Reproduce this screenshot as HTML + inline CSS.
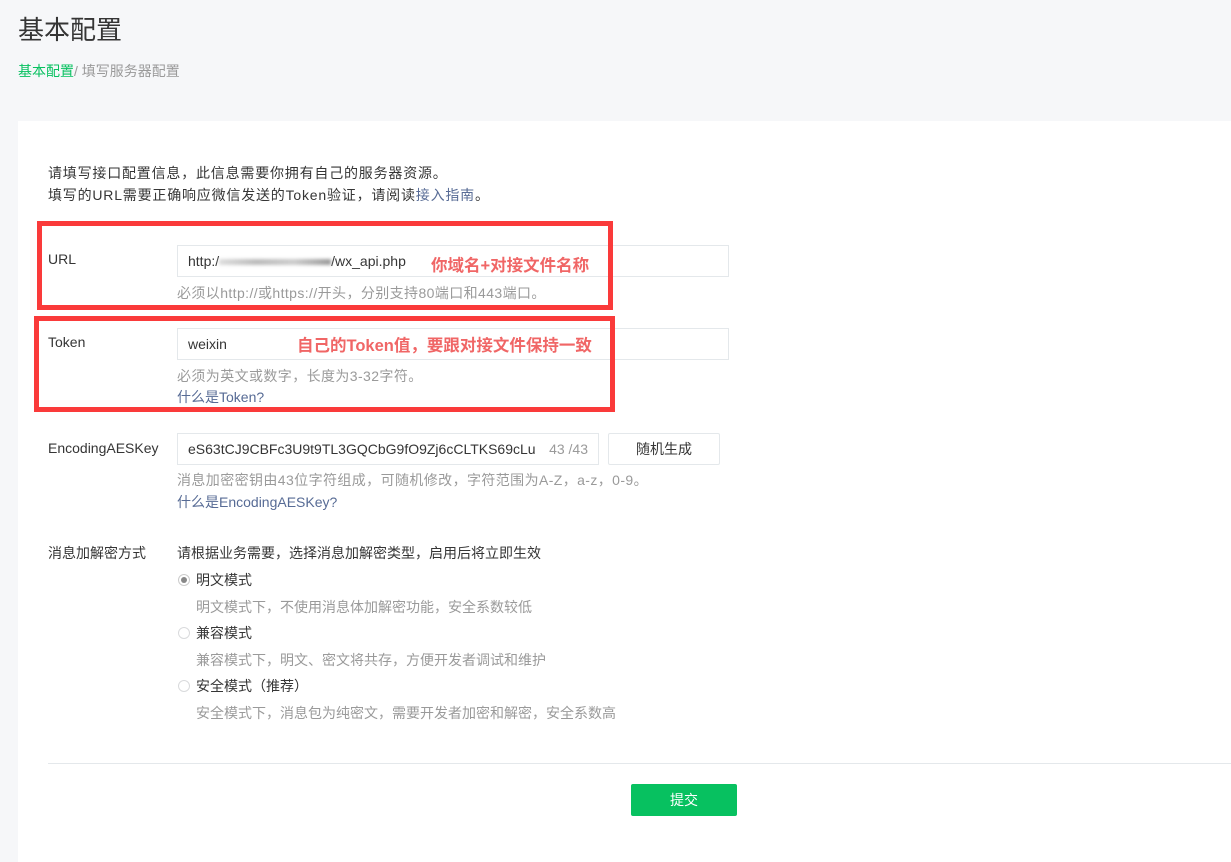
<!DOCTYPE html>
<html><head><meta charset="utf-8"><style>
body{margin:0;width:1231px;height:862px;background:#f6f7f9;font-family:"Liberation Sans","Noto Sans CJK SC",sans-serif;color:#353535;position:relative;overflow:hidden}
.a{position:absolute;white-space:nowrap}
.card{position:absolute;left:18px;top:121px;width:1213px;height:741px;background:#fff}
.in{position:absolute;border:1px solid #e4e8eb;background:#fff;box-sizing:border-box;font-size:14px;line-height:30px;padding-left:10px}
.h{font-size:14px;color:#9a9a9a;letter-spacing:0.4px}
.lk{font-size:14px;color:#576b95}
.rb{position:absolute;border:5px solid #fa3a3a;box-sizing:border-box}
.red{color:#f06666;font-weight:bold;font-size:16.5px}
.r{position:absolute;width:12px;height:12px;border:1px solid #d9dadc;border-radius:50%;box-sizing:border-box;background:#fff}
</style></head><body>
<div class="a" style="left:18px;top:10px;font-size:26px;color:#353535">基本配置</div>
<div class="a" style="left:18px;top:61px;font-size:14px;color:#9a9a9a"><span style="color:#07c160">基本配置</span>/ 填写服务器配置</div>
<div class="card"></div>
<div class="a" style="left:48px;top:162px;font-size:14px;line-height:22px;letter-spacing:0.8px">请填写接口配置信息，此信息需要你拥有自己的服务器资源。<br>填写的URL需要正确响应微信发送的Token验证，请阅读<span style="color:#576b95">接入指南</span>。</div>

<div class="a" style="left:48px;top:251px;font-size:14px">URL</div>
<div class="in" style="left:177px;top:245px;width:552px;height:32px">http:/<span style="display:inline-block;width:112px;height:6px;background:linear-gradient(90deg,#ddd,#bbb,#ccc,#999);vertical-align:middle;filter:blur(1.5px)"></span>/wx_api.php</div>
<div class="a red" style="left:431px;top:252px">你域名+对接文件名称</div>
<div class="a h" style="left:177px;top:283px">必须以http://或https://开头，分别支持80端口和443端口。</div>
<div class="rb" style="left:37px;top:221px;width:576px;height:89px"></div>

<div class="a" style="left:48px;top:334px;font-size:14px">Token</div>
<div class="in" style="left:177px;top:328px;width:552px;height:32px">weixin</div>
<div class="a red" style="left:297px;top:332px">自己的Token值，要跟对接文件保持一致</div>
<div class="a h" style="left:177px;top:366px">必须为英文或数字，长度为3-32字符。</div>
<div class="a lk" style="left:177px;top:387px">什么是Token?</div>
<div class="rb" style="left:34px;top:316px;width:581px;height:96px"></div>

<div class="a" style="left:48px;top:440px;font-size:14px">EncodingAESKey</div>
<div class="in" style="left:177px;top:433px;width:422px;height:32px">eS63tCJ9CBFc3U9t9TL3GQCbG9fO9Zj6cCLTKS69cLu<span style="position:absolute;right:10px;color:#9a9a9a">43 /43</span></div>
<div class="in" style="left:608px;top:433px;width:112px;height:32px;padding:0;text-align:center;font-size:14px;border-radius:2px">随机生成</div>
<div class="a h" style="left:177px;top:470px">消息加密密钥由43位字符组成，可随机修改，字符范围为A-Z，a-z，0-9。</div>
<div class="a lk" style="left:177px;top:492px">什么是EncodingAESKey?</div>

<div class="a" style="left:48px;top:543px;font-size:14px">消息加解密方式</div>
<div class="a" style="left:177px;top:543px;font-size:14px">请根据业务需要，选择消息加解密类型，启用后将立即生效</div>
<div class="r" style="left:178px;top:574px;border-color:#ccc"><div style="margin:2px;width:6px;height:6px;border-radius:50%;background:#888"></div></div>
<div class="a" style="left:196px;top:570px;font-size:14px">明文模式</div>
<div class="a h" style="left:196px;top:597px;letter-spacing:0">明文模式下，不使用消息体加解密功能，安全系数较低</div>
<div class="r" style="left:178px;top:627px"></div>
<div class="a" style="left:196px;top:623px;font-size:14px">兼容模式</div>
<div class="a h" style="left:196px;top:650px;letter-spacing:0">兼容模式下，明文、密文将共存，方便开发者调试和维护</div>
<div class="r" style="left:178px;top:680px"></div>
<div class="a" style="left:196px;top:676px;font-size:14px">安全模式（推荐）</div>
<div class="a h" style="left:196px;top:703px;letter-spacing:0">安全模式下，消息包为纯密文，需要开发者加密和解密，安全系数高</div>

<div class="a" style="left:48px;top:763px;width:1183px;height:1px;background:#e4e8eb"></div>
<div class="a" style="left:631px;top:784px;width:106px;height:32px;background:#07c160;color:#fff;font-size:14px;line-height:32px;text-align:center;border-radius:2px">提交</div>
</body></html>
